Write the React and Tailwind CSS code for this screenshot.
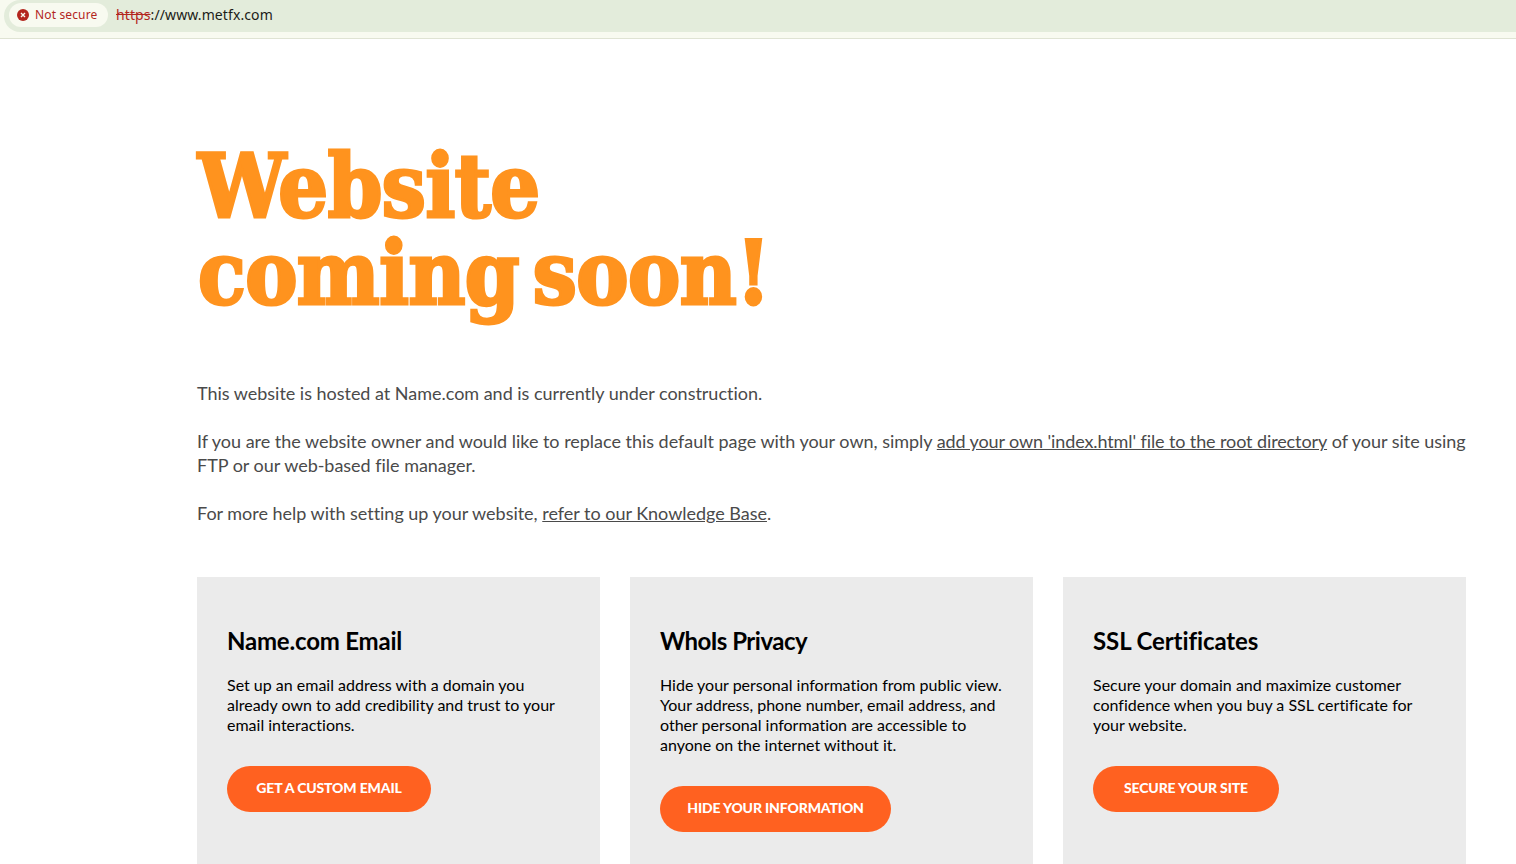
import React from "react";

const cards = [
  {
    title: "Name.com Email",
    titleTracking: "tracking-[-0.2px]",
    lines: [
      "Set up an email address with a domain you",
      "already own to add credibility and trust to your",
      "email interactions.",
    ],
    action: "Get a custom email",
    buttonWidth: "w-[204px]",
  },
  {
    title: "WhoIs Privacy",
    titleTracking: "tracking-[-0.5px]",
    lines: [
      "Hide your personal information from public view.",
      "Your address, phone number, email address, and",
      "other personal information are accessible to",
      "anyone on the internet without it.",
    ],
    action: "Hide your information",
    buttonWidth: "w-[231px]",
  },
  {
    title: "SSL Certificates",
    titleTracking: "tracking-[-0.1px]",
    lines: [
      "Secure your domain and maximize customer",
      "confidence when you buy a SSL certificate for",
      "your website.",
    ],
    action: "Secure your site",
    buttonWidth: "w-[186px]",
  },
];

const AddressBar = () => {
  return (
    <header className="h-[39px] bg-[#f8faf0] border-b border-[#dfe3d3] pl-1 font-['Noto_Sans',sans-serif]">
      <div className="h-8 flex items-center bg-[#e3ecdb] rounded-l-full pl-[5px] pb-[2px]">
        <div className="h-6 w-[99px] flex items-center bg-[#f8faf0] rounded-full pl-2 text-[#b3261e]">
          <svg className="w-3 h-3 shrink-0" viewBox="0 0 12 12">
            <circle cx="6" cy="6" r="6" fill="#b3261e" />
            <path d="M4 4l4 4M8 4l-4 4" stroke="#f8faf0" strokeWidth="1.4" />
          </svg>
          <span className="ml-[6px] text-[12px] tracking-[0.14px] whitespace-nowrap">Not secure</span>
        </div>
        <p className="ml-2 -mt-[2px] text-[14px] tracking-[0.1px] text-[#1b1c18] whitespace-nowrap">
          <span className="text-[#b3261e] line-through">https</span>
          <span>://www.metfx.com</span>
        </p>
      </div>
    </header>
  );
};

const Card = ({ title, titleTracking, lines, action, buttonWidth }) => {
  return (
    <div className="bg-[#ebebeb] px-[30px] pt-12 text-black">
      <h2 className={`text-[24px] leading-8 font-bold ${titleTracking}`}>{title}</h2>
      <p className="mt-[18px] text-[16px] leading-5 whitespace-nowrap">
        {lines.map((line) => (
          <span key={line} className="block">{line}</span>
        ))}
      </p>
      <button className={`mt-[31px] h-[46px] pb-[2px] ${buttonWidth} rounded-full bg-[#ff6120] text-white text-[14px] leading-5 tracking-[-0.15px] font-black uppercase whitespace-nowrap`}>
        {action}
      </button>
    </div>
  );
};

const App = () => {
  return (
    <div className="h-screen flex flex-col overflow-hidden bg-white font-['Lato',sans-serif] [font-variant-ligatures:none]">
      <AddressBar />
      <main className="flex-1 min-h-0 flex flex-col pl-[197px] pr-[50px] pt-[104px]">
        <h1 className="pl-[1px] font-['DejaVu_Serif_Condensed','DejaVu_Serif',serif] font-bold text-[87px] leading-[87px] tracking-[-0.5px] [word-spacing:-13px] text-[#ff931e] [-webkit-text-stroke:3px_#ff931e] whitespace-nowrap">
          <span className="block">Website</span>
          <span className="block">coming soon!</span>
        </h1>
        <div className="mt-[64px] flex flex-col gap-6 text-[18px] leading-6 tracking-[-0.02px] text-[#4a4a4a] whitespace-nowrap">
          <p>This website is hosted at Name.com and is currently under construction.</p>
          <p>
            If you are the website owner and would like to replace this default page with your own, simply{" "}
            <a href="#" className="underline tracking-[-0.11px]">add your own 'index.html' file to the root directory</a> of your site using
            <br />
            FTP or our web-based file manager.
          </p>
          <p>
            For more help with setting up your website,{" "}
            <a href="#" className="underline">refer to our Knowledge Base</a>.
          </p>
        </div>
        <div className="mt-[52px] flex-1 grid grid-cols-3 gap-[30px]">
          {cards.map((card) => (
            <Card key={card.title} {...card} />
          ))}
        </div>
      </main>
    </div>
  );
};

export default App;
